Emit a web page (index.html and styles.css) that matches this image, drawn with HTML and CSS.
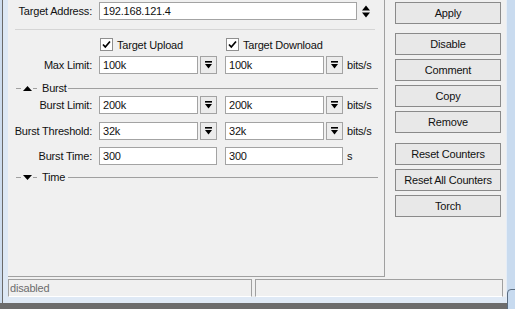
FILE: index.html
```html
<!DOCTYPE html>
<html>
<head>
<meta charset="utf-8">
<link rel="stylesheet" href="styles.css">
</head>
<body>
<div class="screen">
  <div class="win">
    <div class="lframe"></div>
    <div class="client">
      <div class="main">
        <div class="panel">
          <div class="row r-addr">
            <div class="lbl">Target Address:</div>
            <div class="input addr">192.168.121.4</div>
            <svg class="updown" width="8" height="13" viewBox="0 0 8 13"><path d="M0 5.5 L8 5.5 L4 0.5 Z M0 7.5 L8 7.5 L4 12.5 Z" fill="#000"/></svg>
          </div>
          <div class="sep"></div>
          <div class="row r-chk">
            <div class="lbl"></div>
            <div class="chkfield"><svg class="chk" width="13" height="13" viewBox="0 0 13 13"><rect x="0.5" y="0.5" width="12" height="12" fill="#fff" stroke="#8f8f8f"/><path d="M3 6.5 L5.3 9 L10 3.5" fill="none" stroke="#000" stroke-width="1.7"/></svg>Target Upload</div>
            <div class="chkfield"><svg class="chk" width="13" height="13" viewBox="0 0 13 13"><rect x="0.5" y="0.5" width="12" height="12" fill="#fff" stroke="#8f8f8f"/><path d="M3 6.5 L5.3 9 L10 3.5" fill="none" stroke="#000" stroke-width="1.7"/></svg>Target Download</div>
          </div>
          <div class="row r-max">
            <div class="lbl">Max Limit:</div>
            <div class="field"><div class="input dd">100k</div><div class="ddbtn"><svg width="7" height="8" viewBox="0 0 7 8"><rect x="0" y="0" width="7" height="1.6" fill="#000"/><path d="M0 3 L7 3 L3.5 7.5 Z" fill="#000"/></svg></div></div>
            <div class="field"><div class="input dd">100k</div><div class="ddbtn"><svg width="7" height="8" viewBox="0 0 7 8"><rect x="0" y="0" width="7" height="1.6" fill="#000"/><path d="M0 3 L7 3 L3.5 7.5 Z" fill="#000"/></svg></div></div>
            <div class="unit">bits/s</div>
          </div>
          <div class="hdr h-burst">
            <span class="seg s1"></span>
            <svg class="tri" width="9" height="5" viewBox="0 0 9 5"><path d="M0 5 L9 5 L4.5 0 Z" fill="#000"/></svg>
            <span class="seg s2"></span>
            <span class="htxt">Burst</span>
            <span class="seg s3"></span>
          </div>
          <div class="row r-blim">
            <div class="lbl">Burst Limit:</div>
            <div class="field"><div class="input dd">200k</div><div class="ddbtn"><svg width="7" height="8" viewBox="0 0 7 8"><rect x="0" y="0" width="7" height="1.6" fill="#000"/><path d="M0 3 L7 3 L3.5 7.5 Z" fill="#000"/></svg></div></div>
            <div class="field"><div class="input dd">200k</div><div class="ddbtn"><svg width="7" height="8" viewBox="0 0 7 8"><rect x="0" y="0" width="7" height="1.6" fill="#000"/><path d="M0 3 L7 3 L3.5 7.5 Z" fill="#000"/></svg></div></div>
            <div class="unit">bits/s</div>
          </div>
          <div class="row r-bthr">
            <div class="lbl">Burst Threshold:</div>
            <div class="field"><div class="input dd">32k</div><div class="ddbtn"><svg width="7" height="8" viewBox="0 0 7 8"><rect x="0" y="0" width="7" height="1.6" fill="#000"/><path d="M0 3 L7 3 L3.5 7.5 Z" fill="#000"/></svg></div></div>
            <div class="field"><div class="input dd">32k</div><div class="ddbtn"><svg width="7" height="8" viewBox="0 0 7 8"><rect x="0" y="0" width="7" height="1.6" fill="#000"/><path d="M0 3 L7 3 L3.5 7.5 Z" fill="#000"/></svg></div></div>
            <div class="unit">bits/s</div>
          </div>
          <div class="row r-btime">
            <div class="lbl">Burst Time:</div>
            <div class="field"><div class="input full">300</div></div>
            <div class="field"><div class="input full">300</div></div>
            <div class="unit">s</div>
          </div>
          <div class="hdr h-time">
            <span class="seg s1"></span>
            <svg class="tri" width="9" height="5" viewBox="0 0 9 5"><path d="M0 0 L9 0 L4.5 5 Z" fill="#000"/></svg>
            <span class="seg s2"></span>
            <span class="htxt">Time</span>
            <span class="seg s3"></span>
          </div>
        </div>
        <div class="buttons">
          <div class="btn">Apply</div>
          <div class="btn g1">Disable</div>
          <div class="btn">Comment</div>
          <div class="btn">Copy</div>
          <div class="btn">Remove</div>
          <div class="btn g2">Reset Counters</div>
          <div class="btn">Reset All Counters</div>
          <div class="btn">Torch</div>
        </div>
      </div>
      <div class="status">
        <div class="cell c1">disabled</div>
        <div class="cell c2"></div>
      </div>
    </div>
    <div class="rframe"></div>
  </div>
  <div class="taskbar"></div>
  <div class="corner"></div>
</div>
</body>
</html>
```

FILE: styles.css
```css
html, body {
  margin: 0;
  padding: 0;
}
.screen {
  position: relative;
  width: 515px;
  height: 309px;
  overflow: hidden;
  font-family: "Liberation Sans", Arial, sans-serif;
  font-size: 11px;
  letter-spacing: -0.2px;
  color: #111;
  background: #6c6c6c;
}
.win {
  display: flex;
  height: 303px;
}
.lframe {
  width: 8px;
  background: linear-gradient(to right, #cddcee 0 2px, #6a6a6a 2px 3px, #dde8f5 3px 8px);
}
.client {
  width: 498px;
  display: flex;
  flex-direction: column;
  background: #dfe9f5;
}
.main {
  height: 277px;
  display: flex;
  background: #f0f0f0;
}
.panel {
  width: 376px;
  height: 276px;
  border-right: 1px solid #a0a0a0;
  border-bottom: 1px solid #a0a0a0;
  display: flex;
  flex-direction: column;
}
.row {
  display: flex;
  align-items: center;
  height: 18px;
  flex-shrink: 0;
}
.lbl {
  width: 84px;
  margin-right: 7px;
  text-align: right;
  white-space: nowrap;
}
.input {
  box-sizing: border-box;
  height: 18px;
  line-height: 16px;
  border: 1px solid #a3a3a3;
  background: #fff;
  padding-left: 3px;
  white-space: nowrap;
}
.addr { width: 258px; }
.updown { margin-left: 5px; }
.r-addr { margin-top: 2px; }
.sep {
  margin-top: 9px;
  margin-left: 7px;
  width: 360px;
  height: 1px;
  background: #d5d5d5;
  flex-shrink: 0;
}
.r-chk {
  margin-top: 8px;
  height: 13px;
}
.chkfield {
  display: flex;
  align-items: center;
  width: 126px;
  white-space: nowrap;
}
.chk {
  margin-left: 1px;
  margin-right: 4px;
  flex-shrink: 0;
}
.field {
  display: flex;
  width: 118px;
  margin-right: 8px;
}
.field:nth-of-type(3) { margin-right: 4px; }
.dd { width: 99px; }
.full { width: 118px; }
.ddbtn {
  box-sizing: border-box;
  width: 17px;
  height: 18px;
  margin-left: 2px;
  border: 1px solid #a3a3a3;
  background: #ececec;
  display: flex;
  align-items: center;
  justify-content: center;
}
.unit { white-space: nowrap; }
.r-max { margin-top: 5px; }
.hdr {
  display: flex;
  align-items: center;
  height: 11px;
  margin-left: 8px;
  width: 362px;
  flex-shrink: 0;
}
.seg {
  height: 1px;
  background: #a0a0a0;
}
.s1 { width: 5px; }
.tri { margin-left: 2px; margin-right: 1px; }
.s2 { width: 4px; }
.htxt {
  width: 26px;
  padding-left: 5px;
  line-height: 11px;
}
.s3 { flex: 1; }
.h-burst { margin-top: 9px; }
.r-blim { margin-top: 2px; }
.r-bthr { margin-top: 8px; }
.r-btime { margin-top: 7px; }
.h-time { margin-top: 7px; }
.buttons {
  padding-left: 10px;
  padding-top: 2px;
  display: flex;
  flex-direction: column;
  gap: 4px;
}
.btn {
  box-sizing: border-box;
  width: 106px;
  height: 22px;
  line-height: 20px;
  border: 1px solid #8a8a8a;
  background: #e8e8e8;
  text-align: center;
  white-space: nowrap;
}
.g1 { margin-top: 5px; }
.g2 { margin-top: 6px; }
.status {
  display: flex;
  gap: 3px;
  padding-top: 2px;
  height: 18px;
  background: #f0f0f0;
}
.cell {
  box-sizing: border-box;
  height: 18px;
  line-height: 16px;
  border: 1px solid #a0a0a0;
  border-bottom-color: #ffffff;
  color: #6d6d6d;
  padding-left: 1px;
}
.c1 { width: 244px; }
.c2 { width: 248px; }
.rframe {
  width: 9px;
  background: linear-gradient(to right, #e6edf6 0 1px, #c9dbef 1px 9px);
}
.taskbar {
  height: 6px;
  background: #6c6c6c;
}
.corner {
  position: absolute;
  left: 507px;
  top: 289px;
  width: 12px;
  height: 24px;
  box-sizing: border-box;
  border: 1px solid #5a6c80;
  border-radius: 4px 0 0 0;
  background: #c7daef;
}
```
